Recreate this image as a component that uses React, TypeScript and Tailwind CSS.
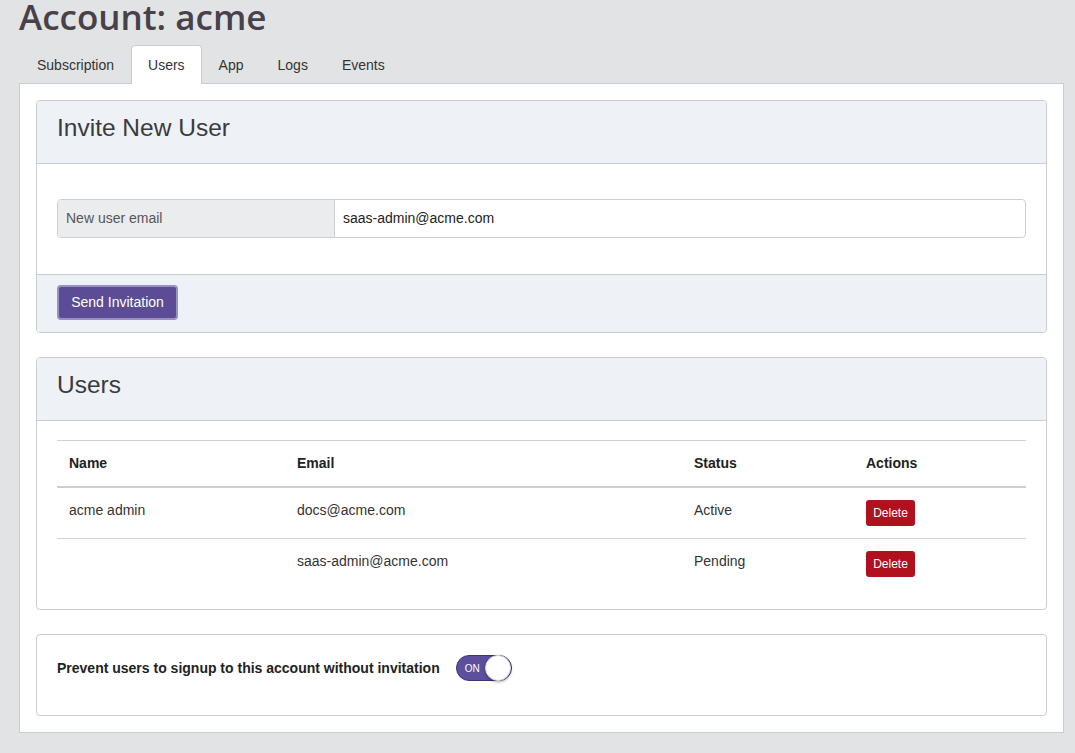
import React from 'react';

const tabs = ['Subscription', 'Users', 'App', 'Logs', 'Events'];

const users = [
  { name: 'acme admin', email: 'docs@acme.com', status: 'Active' },
  { name: '', email: 'saas-admin@acme.com', status: 'Pending' },
];

function Card({ title, children }: { title?: string; children: React.ReactNode }) {
  return (
    <div className="bg-white border border-[#c9cdd2] rounded-[4px] overflow-hidden">
      {title && (
        <div className="h-[63px] flex items-center px-5 pb-[7px] bg-[#eef1f5] border-b border-[#c9cdd2]">
          <h2 className="text-[24.5px] text-[#3b3b3f] leading-none">{title}</h2>
        </div>
      )}
      {children}
    </div>
  );
}

export default function App() {
  return (
    <div
      className="min-h-[753px] bg-[#e2e3e5] pl-[19px] pr-[11px] pb-5 text-[14px] text-[#333]"
      style={{ fontFamily: '"Liberation Sans", Arial, sans-serif' }}
    >
      <h1
        className="mt-[-5px] mb-[7px] text-[35px] leading-[43px] font-semibold text-[#47414a]"
        style={{ fontFamily: '"Open Sans", sans-serif' }}
      >
        Account: acme
      </h1>

      {/* tabs */}
      <div className="flex pl-px relative z-10">
        {tabs.map((t) => (
          <div
            key={t}
            className={`h-[39px] px-4 flex items-center border border-b-0 rounded-t-[4px] ${
              t === 'Users' ? 'bg-white border-[#c9cdd2]' : 'border-transparent'
            } text-[#333]`}
          >
            {t}
          </div>
        ))}
      </div>

      <div className="-mt-px bg-white border border-[#c9cdd2] p-4 flex flex-col gap-6">
        <Card title="Invite New User">
          <div className="px-5 pt-[35px] pb-[36px]">
            <div className="flex h-[39px] border border-[#ccd0d4] rounded-[4px] overflow-hidden">
              <div className="w-[277px] bg-[#ebecee] border-r border-[#ccd0d4] flex items-center px-2 text-[#555]">
                New user email
              </div>
              <div className="flex-1 flex items-center px-2 text-[#222]">saas-admin@acme.com</div>
            </div>
          </div>
          <div className="bg-[#eef1f5] border-t border-[#c9cdd2] px-5 pt-[10px] pb-[12px]">
            <button className="h-[35px] w-[121px] rounded-[4px] bg-[#5b4c95] border-2 border-[#9a90c6] text-white text-[14px]">
              Send Invitation
            </button>
          </div>
        </Card>

        <Card title="Users">
          <div className="px-5 pt-[19px] pb-5">
            <table className="w-full border-collapse text-left">
              <colgroup>
                <col className="w-[228px]" />
                <col className="w-[397px]" />
                <col className="w-[172px]" />
                <col />
              </colgroup>
              <thead>
                <tr className="border-t border-[#cfd2d6] border-b-2 border-b-[#cbced2]">
                  {['Name', 'Email', 'Status', 'Actions'].map((h) => (
                    <th key={h} className="p-3 leading-[21px] font-bold text-[#222]">
                      {h}
                    </th>
                  ))}
                </tr>
              </thead>
              <tbody>
                {users.map((u, i) => (
                  <tr key={u.email} className={i === 0 ? 'border-b border-[#cfd2d6]' : ''}>
                    <td className="p-3 leading-[21px] align-top">{u.name}</td>
                    <td className="p-3 leading-[21px] align-top">{u.email}</td>
                    <td className="p-3 leading-[21px] align-top">{u.status}</td>
                    <td className="p-3 align-top">
                      <button className="h-[26px] w-[49px] rounded-[3px] bg-[#b1101f] text-white text-[12px]">
                        Delete
                      </button>
                    </td>
                  </tr>
                ))}
              </tbody>
            </table>
          </div>
        </Card>

        <Card>
          <div className="px-5 pt-5 pb-[34px] flex items-center gap-4">
            <span className="font-bold text-[#222]">Prevent users to signup to this account without invitation</span>
            <div className="relative w-[56px] h-[26px] rounded-full bg-[#5e4f9c] border border-[#3f3475] flex items-center">
              <span className="pl-2 text-[10px] text-white">ON</span>
              <span className="absolute right-0 top-[-1px] w-[26px] h-[26px] rounded-full bg-white border border-[#d6d6de] shadow-[0_1px_3px_rgba(0,0,0,0.35)]" />
            </div>
          </div>
        </Card>
      </div>
    </div>
  );
}
